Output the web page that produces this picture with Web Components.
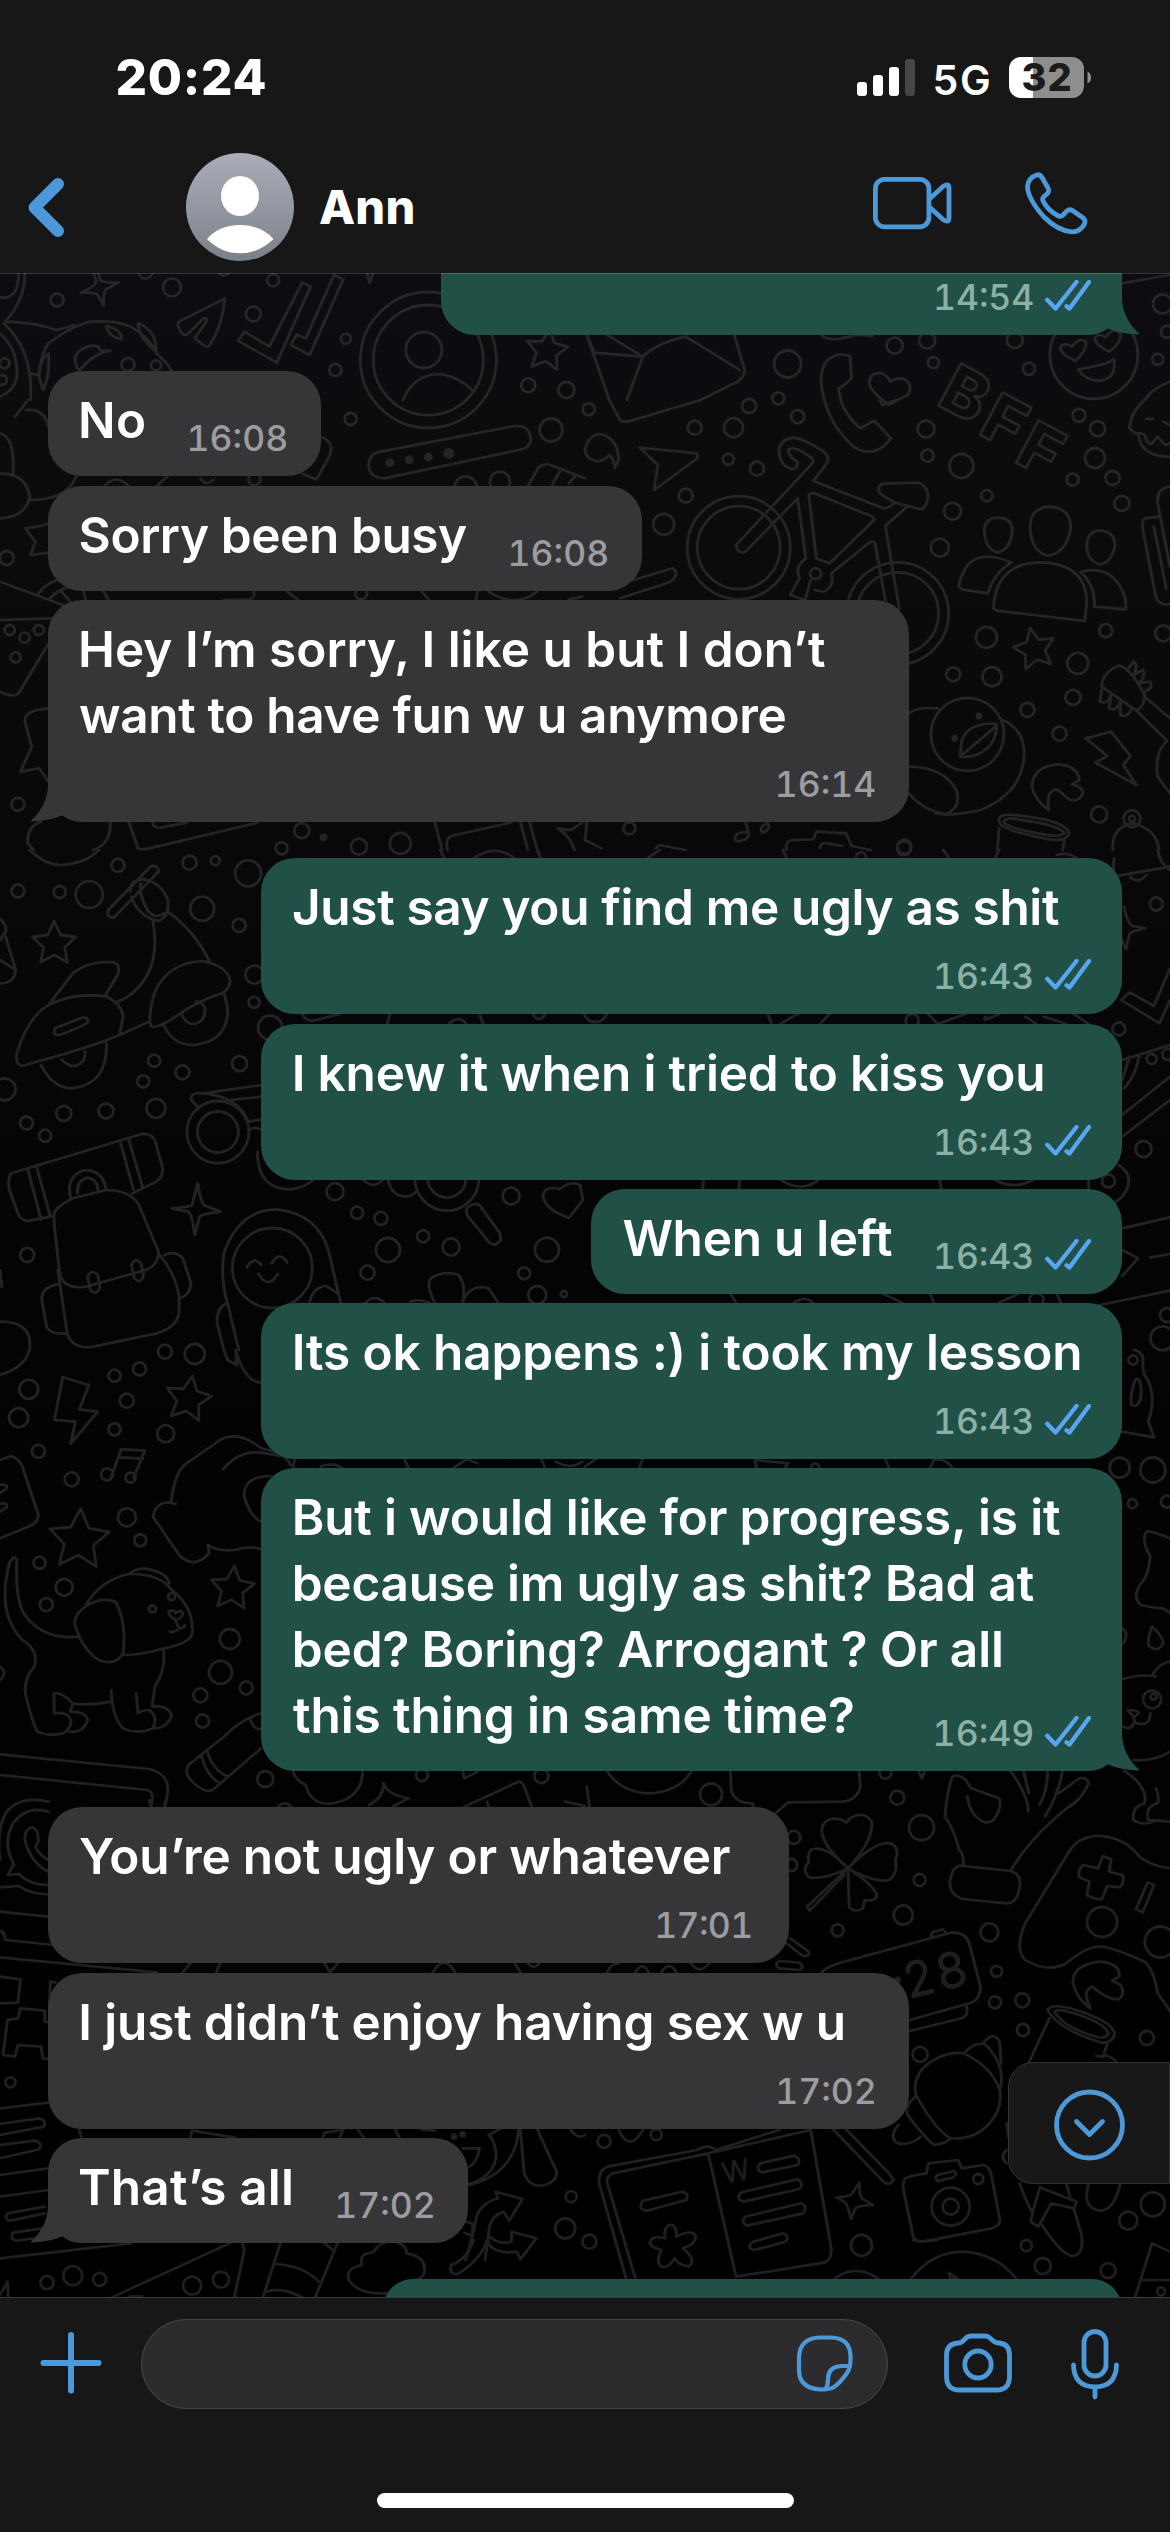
<!DOCTYPE html>
<html lang="en">
<head>
<meta charset="utf-8">
<title>Chat</title>
<style>
html,body{margin:0;padding:0;background:#171717}
body{width:1170px;height:2532px;overflow:hidden;font-family:Inter,"Open Sans",sans-serif}
</style>
</head>
<body>
<chat-app></chat-app>

<template id="app-t">
<style>
:host{display:flex;flex-direction:column;width:1170px;height:2532px;background:#171717;color:#fff}
.log{height:2024px;position:relative;overflow:hidden;flex:none}
.log::after{content:"";position:absolute;left:0;right:0;top:0;height:1px;background:rgba(255,255,255,.17);z-index:3}
.list{position:relative;display:flex;flex-direction:column;padding:0 48px;z-index:1}
.g9{margin-top:9px}.g10{margin-top:10px}.g36{margin-top:36px}
</style>
<status-bar></status-bar>
<chat-header></chat-header>
<div class="log">
<doodle-wall></doodle-wall>
<div class="list">
<chat-message side="out" width="681" time="14:54" tw="99" tail cut="top"></chat-message>
<chat-message class="g36" side="in" width="273" inline time="16:08" tw="99.6"><fit-text x="33" w="63">No</fit-text></chat-message>
<chat-message class="g10" side="in" width="594" inline time="16:08" tw="99.6"><fit-text x="32.6" w="386.5">Sorry been busy</fit-text></chat-message>
<chat-message class="g9" side="in" width="861" time="16:14" tw="99.3" tail><fit-text x="33" w="744">Hey I’m sorry, I like u but I don’t</fit-text><fit-text x="32" w="705.5">want to have fun w u anymore</fit-text></chat-message>
<chat-message class="g36" side="out" width="861" time="16:43" tw="99"><fit-text x="32" w="766">Just say you find me ugly as shit</fit-text></chat-message>
<chat-message class="g10" side="out" width="861" time="16:43" tw="99"><fit-text x="33.7" w="747.7">I knew it when i tried to kiss you</fit-text></chat-message>
<chat-message class="g9" side="out" width="531" inline time="16:43" tw="99"><fit-text x="32.4" w="268.6">When u left</fit-text></chat-message>
<chat-message class="g9" side="out" width="861" time="16:43" tw="99"><fit-text x="33.7" w="784.6">Its ok happens :) i took my lesson</fit-text></chat-message>
<chat-message class="g9" side="out" width="861" inline time="16:49" tw="99.4" tail><fit-text x="33.7" w="765.3">But i would like for progress, is it</fit-text><fit-text x="33.7" w="739">because im ugly as shit? Bad at</fit-text><fit-text x="33.7" w="706.3">bed? Boring? Arrogant ? Or all</fit-text><fit-text x="32" w="560">this thing in same time?</fit-text></chat-message>
<chat-message class="g36" side="in" width="741" time="17:01" tw="95.3" tr="38.5"><fit-text x="32" w="649.8">You’re not ugly or whatever</fit-text></chat-message>
<chat-message class="g10" side="in" width="861" time="17:02" tw="98.8"><fit-text x="33.3" w="761.5">I just didn’t enjoy having sex w u</fit-text></chat-message>
<chat-message class="g9" side="in" width="420" inline time="17:02" tw="98.8" tail><fit-text x="32" w="211">That’s all</fit-text></chat-message>
<chat-message class="g36" side="out" width="739" cut="bottom"></chat-message>
</div>
<scroll-down></scroll-down>
</div>
<chat-composer></chat-composer>
</template>

<template id="status-t">
<style>
:host{display:flex;height:120px;justify-content:space-between;flex:none}
.l{padding:38px 0 0 117.5px}
.clock{font-size:49.5px;font-weight:780;line-height:78px;display:block}
.r{display:flex;padding:57px 78px 0 0;align-items:flex-start}
.net{font-size:41px;font-weight:600;line-height:52px;margin:-3px 20px 0 20px}
.bat{width:75px;height:41px;border-radius:12px;background:linear-gradient(90deg,#fff 24px,#8e8e8e 24px);display:flex;justify-content:center;align-items:center}
.bat fit-text{color:#1b1b1b;font-size:38px;font-weight:800;line-height:41px}
svg{display:block}
</style>
<div class="l"><fit-text class="clock" w="148">20:24</fit-text></div>
<div class="r">
<svg width="58" height="41"><g fill="#fff"><rect y="25" width="10" height="14" rx="3.2"/><rect x="16" y="18" width="10" height="21" rx="3.2"/><rect x="32" y="10" width="10" height="29" rx="3.2"/></g><rect x="48" y="2" width="10" height="37" rx="3.2" fill="#464646"/></svg>
<fit-text class="net" w="54.5">5G</fit-text>
<div class="bat"><fit-text w="48">32</fit-text></div>
<svg width="8" height="41"><path d="M3.5 14.5Q7 16 7 20.5T3.5 26.5Z" fill="#8e8e8e"/></svg>
</div>
</template>

<template id="header-t">
<style>
:host{display:flex;height:153px;flex:none;align-items:flex-start}
svg{display:block;flex:none}
.name{font-size:47px;font-weight:780;line-height:58px;margin:58px 0 0 26px}
.calls{margin-left:auto;display:flex;padding:52px 79px 0 0;gap:70px}
.calls svg{fill:none;stroke:#4d98d8;stroke-width:4.8;stroke-linejoin:round;stroke-linecap:round}
</style>
<svg width="186" height="153" viewBox="0 120 186 153" fill="none" stroke="#4d98d8" stroke-width="12" stroke-linecap="round" stroke-linejoin="round"><path d="M58 184L34.5 207.5L58 231"/></svg>
<svg width="108" height="153" viewBox="186 120 108 153"><defs><linearGradient id="a" x2="0" y2="1"><stop stop-color="#a9adb9"/><stop offset=".6" stop-color="#8f939d"/><stop offset="1" stop-color="#7b8188"/></linearGradient></defs><circle cx="240" cy="207" r="54" fill="url(#a)"/><ellipse cx="240" cy="196" rx="19" ry="20" fill="#fff"/><path d="M207 239Q219 225 240 225T273.5 239Q259 253.300 240 253.300T207 239Z" fill="#fff"/></svg>
<fit-text class="name" w="93.400">Ann</fit-text>
<div class="calls">
<svg width="81" height="64" viewBox="872 172 81 64"><rect x="875.400" y="179.400" width="53.500" height="47.400" rx="9"/><path d="M930.500 198L943 186.500Q949 182.500 949 188V218Q949 223.500 943 219.500L930.500 208"/></svg>
<svg width="68" height="64" viewBox="1023 172 68 64"><path d="M1036.500 175Q1040 174 1042.300 178L1048 188Q1049.500 191 1047.500 193.500L1043.500 197Q1042 199 1043.200 201.500Q1049 211.500 1058.500 216Q1061 217 1063 215L1067 210.800Q1069.500 208.800 1072.500 210.500L1082.500 217.500Q1086 220 1084.500 224Q1080 232 1072 231.800Q1058 231 1044 217Q1028 199 1027.500 187Q1028 178 1036.500 175Z"/></svg>
</div>
</template>

<template id="message-t">
<style>
:host{display:flex}
:host([side=out]){justify-content:flex-end}
.b{position:relative;box-sizing:border-box;display:flex;flex-direction:column;padding:16px 0;border-radius:34px;background:#363638;color:#fff;font-size:49.5px;font-weight:570;line-height:66px}
:host([side=out]) .b{background:#215146}
:host([inline]) .text{padding-bottom:7px}
:host([inline]) .meta{margin-top:-44px}
.meta{display:flex;justify-content:flex-end;align-items:center;height:44px;margin-top:14px;font-size:35.5px;font-weight:550;line-height:44px;color:#9c9ca1;padding-right:34px}
:host([side=out]) .meta{color:#8cb0a6;padding-right:31px;gap:12px}
.meta fit-text{font-feature-settings:"tnum" 1,"calt" 1;margin-top:2px}
.tail{position:absolute;bottom:0;left:-18px}
:host([side=out]) .tail{left:auto;right:-18px;transform:scaleX(-1)}
:host([cut=top]) .b{height:62px;padding:0 0 16px;border-radius:0 0 34px 34px}
:host([cut=top]) .meta{margin-top:2px}
:host([cut=bottom]) .b{height:60px}
.tick{display:block;margin-top:-4px}
</style>
<div class="b"><div class="text"><slot></slot></div></div>
</template>

<template id="composer-t">
<style>
:host{display:flex;flex-direction:column;flex:1;background:#171717;border-top:1px solid #3c3c3e;box-sizing:border-box;align-items:center}
.row{display:flex;width:100%;padding-top:21px;height:90px}
.field{box-sizing:border-box;width:747px;height:90px;border:1px solid #48484a;border-radius:45px;background:#2c2c2e;display:flex;justify-content:flex-end;align-items:center}
svg{display:block;fill:none;stroke:#4d98d8;stroke-width:4.8;stroke-linejoin:round;stroke-linecap:round}
.home{width:417px;height:15px;border-radius:8px;background:#fff;margin-top:84px}
</style>
<div class="row">
<svg width="141" height="90" viewBox="0 2319 141 90" style="stroke-width:6"><path d="M71 2335V2390.500M43.500 2363H98.500"/></svg>
<div class="field"><svg width="92" height="88" viewBox="796 2320 92 88" style="stroke-width:4.2"><path d="M821 2337.500H832Q851 2338 851.500 2356Q852 2368 848 2373Q841 2383 835 2387Q831 2389.500 821 2389.500Q800 2388 800 2370V2357Q801 2338 821 2337.500Z"/><path d="M850 2366H842Q829 2367 829 2379Q829 2385 827 2388"/></svg></div>
<svg width="282" height="90" viewBox="888 2319 282 90"><path d="M972 2336H985Q988 2336 990 2338L994 2341.500Q996 2343 999 2343Q1009.500 2344 1009.500 2355V2376Q1009.500 2390 997 2390H959Q946.500 2390 946.500 2376V2355Q946.500 2344 958 2343Q961 2343 963 2341L966 2338Q968 2336 972 2336Z"/><ellipse cx="978" cy="2364.500" rx="13.200" ry="13.500"/><rect x="1084" y="2331.500" width="22" height="44.500" rx="11"/><path d="M1073.500 2365Q1074 2386.500 1095 2387Q1116 2386.500 1116.500 2365M1095 2387V2397"/></svg>
</div>
<div class="home"></div>
</template>

<template id="down-t">
<style>
:host{position:absolute;z-index:2;right:0;top:1789px;width:162px;height:122px;box-sizing:border-box;border:1px solid #343436;border-radius:25px 0 0 25px;background:#181818;display:block}
svg{display:block;fill:none;stroke:#4d98d8;stroke-width:4.8;stroke-linecap:round;stroke-linejoin:round}
</style>
<svg width="160" height="120"><circle cx="80.500" cy="62" r="33"/><path d="M67.500 58.500L80.500 71.500L93.500 58.500"/></svg>
</template>

<script>
const stamp = (el, id) => {
  const root = el.attachShadow({mode: 'open'});
  root.append(document.getElementById(id).content.cloneNode(true));
  return root;
};

/* One line of text whose letter spacing is tuned so its ink spans the given width. */
class FitText extends HTMLElement {
  connectedCallback() {
    if (this.shadowRoot) return;
    const root = this.attachShadow({mode: 'open'});
    root.innerHTML = '<style>:host{display:block;flex:none;white-space:pre}span{display:inline-block}</style><span><slot></slot></span>';
    const text = this.textContent, cs = getComputedStyle(this), span = root.querySelector('span');
    const ctx = document.createElement('canvas').getContext('2d');
    ctx.font = cs.fontWeight + ' ' + cs.fontSize + ' Inter, "Open Sans", sans-serif';
    const w = +this.getAttribute('w');
    const m = ctx.measureText(text);
    /* Font features widen the laid-out line beyond what the canvas reports. */
    const extra = span.getBoundingClientRect().width - m.width;
    const ink = m.actualBoundingBoxRight + m.actualBoundingBoxLeft;
    this.style.letterSpacing = ((w - ink - extra) / (text.length - 1)).toFixed(3) + 'px';
    this.style.width = w + 'px';
    if (this.hasAttribute('x')) this.style.marginLeft = this.getAttribute('x') + 'px';
    span.style.marginLeft = m.actualBoundingBoxLeft + 'px';
  }
}

class ChatMessage extends HTMLElement {
  connectedCallback() {
    if (this.shadowRoot) return;
    const root = stamp(this, 'message-t'), b = root.querySelector('.b');
    b.style.width = this.getAttribute('width') + 'px';
    const out = this.getAttribute('side') === 'out', time = this.getAttribute('time');
    if (time) {
      const pad = this.getAttribute('tr');
      b.insertAdjacentHTML('beforeend', `<div class="meta"${pad ? ` style="padding-right:${pad}px"` : ''}><fit-text w="${this.getAttribute('tw')}">${time}</fit-text>${out ? '<svg class="tick" width="46" height="31" fill="none" stroke="#58a5f3" stroke-width="4.300" stroke-linecap="round" stroke-linejoin="round"><path d="M2.200 19.800L10.600 28.500L31.500 2M21.500 26.200L24.500 28.500L44 2"/></svg>' : ''}</div>`);
    }
    if (this.hasAttribute('tail')) b.insertAdjacentHTML('beforeend', `<svg class="tail" width="60" height="60"><path d="M18 18V24Q17 44 1 58.500Q.5 59.600 3 59.400Q20 59 33 53L34 18Z" fill="${out ? '#215146' : '#363638'}"/></svg>`);
  }
}

/* Wallpaper: line doodles, grouped in tiles that share one coordinate scale. */
const SX = 585 / 1568, SY = 1 / 3;
const TILES = [
 [0,0,`M252 822L258 845Q255 860 216 878Q250 875 262 885L278 916Q276 880 284 868L318 847Q290 850 270 843L264 822M66 820Q70 890 15 965M0 892Q50 900 50 820M15 965Q100 968 150 990Q170 985 200 975M105 1120Q110 1060 130 1030Q180 985 240 965Q310 960 350 980Q400 1010 420 1060Q450 1090 460 1112M285 978Q290 1010 325 1018Q330 990 285 978ZM370 970Q370 1010 418 1055Q420 990 370 970ZM295 1052Q250 1060 213 1112Q190 1080 210 1055Q240 1030 265 1040Q260 1055 295 1052M130 1060Q100 1090 105 1130L115 1170Q135 1130 130 1060M0 1000Q50 1050 45 1130Q40 1170 0 1190M10 970Q90 1050 82 1200M82 1120L105 1125M603 895L480 965Q470 975 490 1003Q500 1008 510 995L545 955Q560 950 550 970L522 1015L545 1035Q560 1045 562 1035Q595 980 603 895ZM810 847L832 860L742 1088L638 1022L655 995L722 1040ZM895 825L920 838L830 1065L780 1035L795 1003L820 1015ZM985 822L990 848L1000 822M1080 1200Q1110 1122 1180 1122Q1230 1130 1265 1170`,
 [[153,900,6.5],[461,862,9],[732,841,6],[679,942,7.5],[927,1016,5],[899,1110,6],[1416,1156,7],[1518,1170,8],[390,815,7],[600,808,6],[12,1090,5],[5,1140,5],[1148,1080,68],[1148,1080,55],[1136,1050,18],[343,1094,6.5],[418,1096,5]],[[1466,1052,20,8]]],
 [585,0,`M1439 850L1568 825M5 1005L65 1200M5 1005L25 1058L155 1070L60 1005M155 1070L112 1200M155 1070Q190 1030 270 1010L415 1110M400 1005L428 1110Q428 1140 390 1155L310 1200M642 1200Q620 1120 650 1080Q680 1055 710 1068L715 1135Q690 1160 680 1165L685 1200M635 1005Q650 1030 725 1005L770 1008M815 1215Q760 1170 762 1145Q765 1115 795 1120Q815 1130 818 1145Q840 1130 860 1140Q880 1160 865 1185Q845 1195 815 1215ZM1315 1083Q1270 1060 1275 1040Q1285 1025 1305 1040Q1325 1010 1343 1025Q1345 1050 1315 1083ZM1405 1055Q1362 1030 1367 1012Q1378 998 1395 1012Q1415 980 1435 1000Q1440 1025 1405 1055ZM1322 1108Q1400 1095 1418 1078Q1425 1140 1375 1142Q1340 1140 1322 1108ZM1500 1200Q1520 1165 1568 1145`,
 [[1548,912,9.5],[1560,995,6],[830,1037,8],[917,1022,8],[934,1088,5.5],[1152,1020,8],[1190,1106,6],[1535,1078,5.5],[543,1092,13.5],[518,1195,6],[1364,1065,44]],[]],
 [0,400,`M40 50L75 0M70 30Q120 25 130 80M0 100Q40 110 35 220M0 220Q70 220 80 290Q70 350 0 355M80 300Q180 300 205 228M280 258Q310 220 345 258M865 112Q900 130 880 175L848 238L810 222M1020 155L1380 78Q1420 75 1423 120Q1420 145 1390 150L1030 235Q990 235 988 195Q990 160 1020 155ZM1415 258L1445 200Q1460 190 1475 195L1568 235M1480 255L1500 215M1525 250L1540 230M420 258L450 228M538 235Q550 260 572 240M130 370L110 378L68 385L95 425L82 465L130 458M0 545L180 620M135 655L0 660M100 585Q130 535 200 530Q270 540 290 600M130 600Q160 560 200 560M165 575L200 620M220 560L230 600M130 730L50 880Q40 895 0 875M130 925Q60 930 68 970L85 1040L55 1115L105 1105L130 1145M110 1265Q70 1280 75 1330L90 1350M295 1265Q300 1330 250 1350M345 1265L370 1345Q380 1350 400 1345L690 1268M410 1268Q410 1285 430 1283L500 1268M1165 1265L1185 1350M1200 1350Q1190 1310 1220 1305L1370 1268M1395 1268L1415 1350M1420 1268L1440 1350M1495 1285L1530 1290L1560 1268M1495 1285Q1530 1310 1540 1350M600 600L670 598Q685 590 680 575M770 575L800 600M1130 575L1150 600M1280 575L1275 600M1310 575Q1380 625 1440 575M1525 598L1560 590`,
 [[18,474,7],[682,238,6],[940,57,6],[1477,90,11.5],[1340,245,10],[1248,262,11],[26,690,5],[66,713,5],[104,690,5],[42,772,5],[48,1213,6.5],[809,1292,7.5],[755,1345,6],[962,1340,8],[1073,1330,10.5],[968,580,6],[1045,188,3,1],[1097,179,3,1],[1148,171,3,1],[1203,160,4,1],[867,1312,2.5,1]],[]],
 [585,400,`M65 0L95 62Q110 68 130 60L310 0M642 0Q660 80 720 140Q760 170 800 140L820 115L775 62L738 85Q700 50 685 0M790 0L797 15L835 0M0 150Q10 100 45 103Q90 120 90 180L80 203Q80 180 65 165Q50 185 30 183Q0 175 0 150M147 143L300 160Q305 168 298 178L185 270L195 195ZM405 435L605 195Q620 180 600 168Q560 135 545 150Q545 170 570 185Q570 205 555 208Q520 195 520 150Q525 115 560 113Q590 118 640 155Q660 175 645 195L612 243L800 325Q815 325 830 308L790 280Q780 250 810 250L895 248Q925 265 918 300Q910 335 890 325L830 308M865 318L805 378L842 625M405 435Q410 465 430 455L570 295L592 475Q560 500 575 535L550 585L590 600L605 540M600 285L620 475L655 490L775 360Q775 350 760 345L615 280Q600 280 600 285M665 515L765 425Q775 420 778 435L805 600M660 520Q670 560 640 575L615 570M1070 395Q1070 353 1107 353Q1147 355 1145 395Q1140 450 1105 457Q1075 450 1070 395ZM1193 380Q1195 320 1247 320Q1302 325 1302 385Q1290 460 1242 467Q1195 455 1193 380ZM1345 435Q1347 390 1383 392Q1422 395 1420 440Q1410 490 1378 493Q1345 480 1345 435ZM1143 487Q1060 450 1025 495Q1005 530 1002 560L1010 568L1080 580Q1095 520 1143 487ZM1095 625Q1100 490 1220 487Q1340 490 1345 600L1340 663L1105 632ZM1328 515Q1400 495 1435 560Q1455 600 1448 628L1365 620Q1370 560 1328 515ZM1568 260Q1530 265 1535 310L1568 500M1540 350L1500 355Q1490 365 1497 400L1530 590Q1540 620 1568 612M1525 380L1558 565M1500 0Q1460 40 1460 85Q1475 105 1490 100L1500 105Q1510 140 1520 130L1535 110L1555 135L1568 130M1483 105Q1490 170 1568 170M1505 57H1523M1550 65L1568 75M1430 797Q1460 800 1500 885Q1500 920 1478 932L1385 860Q1385 820 1430 797ZM1455 808L1470 785Q1485 795 1470 825L1495 810Q1505 825 1485 850L1515 845Q1525 865 1498 875M1385 870L1380 905Q1400 915 1410 885L1405 925Q1425 935 1435 905L1435 945Q1455 955 1465 925M1500 890L1568 955M1478 932L1560 1022Q1525 1060 1535 1130L1568 1180M1342 1015L1410 995L1462 1068L1443 1095L1478 1155L1368 1088L1400 1068ZM1103 972Q1030 965 1010 1020L1005 1070Q1060 1075 1090 1030Q1105 1000 1103 972M1005 1070L1100 980M868 940Q890 920 945 925M1120 960Q1180 990 1177 1070Q1170 1180 1060 1230Q980 1250 940 1240M868 1100Q960 1100 995 1170Q1010 1220 970 1242Q910 1235 868 1180M1305 1153L1325 1140Q1320 1095 1265 1093Q1200 1100 1198 1160Q1205 1200 1243 1230Q1235 1170 1265 1168L1300 1200Q1330 1205 1335 1175Q1325 1155 1305 1153M1110 1265Q1105 1240 1150 1245Q1290 1260 1297 1300Q1290 1330 1230 1315Q1115 1290 1110 1265ZM1122 1265Q1130 1250 1160 1258Q1275 1275 1285 1300Q1270 1312 1230 1303Q1130 1285 1122 1265ZM1110 1285L1105 1350M1285 1325L1280 1350M1415 1350Q1410 1280 1470 1270Q1535 1290 1538 1350M430 1268Q440 1290 438 1310Q420 1330 402 1320Q400 1295 430 1297M490 1268Q500 1290 475 1298Q465 1280 490 1268M540 1350Q535 1320 560 1320L612 1318L620 1295L700 1300L715 1338L765 1350M630 1345Q630 1325 650 1330L690 1338M190 1345L200 1335L270 1350M5 1268L0 1320L45 1345M95 595L230 545Q255 520 235 505L130 540`,
 [[10,28,6],[440,18,7],[570,50,6.5],[398,83,9.5],[294,83,7],[384,178,5.5],[461,206,7],[270,287,7],[211,373,10.5],[914,87,8.5],[918,167,6],[1009,198,12],[1324,46,6.5],[1374,86,7.5],[1367,174,10],[1307,239,6],[1414,234,7],[1439,310,7.5],[1077,287,5.5],[985,334,8.5],[951,443,9],[1076,712,10.5],[1396,692,6.5],[1550,700,8],[987,823,7],[1091,830,9.5],[1321,790,10.5],[1308,892,7.5],[1186,930,7],[1272,1001,7],[1378,1243,8],[119,1285,6],[856,1340,7],[412,443,51.5],[412,443,41.5],[838,640,51],[838,640,41],[618,521,5.5],[1025,1003,36.5],[1056,948,2,1],[991,1015,2,1],[1466,1256,8.5],[1466,1256,3]],[[1205,748,20,-12]]],
 [0,850,`M80 0Q120 45 165 45Q230 40 265 0M290 180Q285 205 305 203L425 65Q425 45 405 48ZM350 125Q345 90 385 88Q430 95 450 150Q455 200 425 213Q370 200 352 140M378 100Q370 130 395 180Q415 210 440 190M410 215Q425 310 395 375Q360 440 310 457M452 187Q520 240 562 335M405 530Q395 500 415 425Q450 340 540 333Q610 345 617 395Q610 430 580 435Q520 460 470 500Q425 535 405 530M437 520Q460 585 520 585Q605 575 610 490Q610 460 600 430M487 490Q495 522 520 522Q555 515 548 470Q540 455 525 455M130 465L195 370Q240 330 305 337Q325 345 315 375L282 437M130 465Q200 425 285 440Q325 460 330 500L320 555Q250 590 60 647Q40 645 45 610Q75 500 130 465ZM320 555L400 515M150 533L220 503Q238 500 235 517Q230 525 160 555Q135 555 150 533M110 645Q140 715 195 715Q290 700 285 580M165 628Q180 648 200 648Q230 640 228 605M0 205Q20 230 15 245L0 270M15 260L42 360Q40 400 0 400M0 330L40 358M530 770L512 750Q510 725 545 730L700 705M620 750L700 740M545 730Q640 740 665 815L700 808M668 840Q680 828 700 838M690 905Q690 1020 780 1018Q820 1012 838 990M355 1030L410 1000Q440 985 435 950L415 870Q405 850 380 852L30 970Q20 985 25 1020L50 1095Q60 1115 80 1112L145 1098M75 960L110 1108M98 950L135 1100M322 875L358 1020M345 868L382 1010M190 1045Q175 985 220 962Q275 955 285 1020M208 1030Q205 990 235 983Q260 988 263 1020M145 1090Q150 1070 195 1045L285 1020Q345 1020 370 1060L425 1205Q425 1245 390 1260L230 1310Q170 1320 160 1270L145 1120ZM155 1260L180 1450Q195 1500 250 1490L420 1450Q480 1430 480 1380V1340Q470 1270 428 1215M440 1215Q470 1200 490 1225L512 1300Q510 1335 482 1345M157 1303Q110 1310 112 1350L125 1430Q135 1455 180 1450M235 1280Q245 1255 262 1275L268 1310Q260 1340 242 1320ZM352 1245Q362 1220 378 1240L385 1275Q378 1305 360 1285ZM530 1000Q540 1070 552 1068L592 1085Q545 1090 535 1100L522 1155Q515 1095 505 1085L460 1075Q510 1070 515 1065ZM640 1500L610 1360Q590 1290 600 1210Q640 1080 740 1078Q850 1090 880 1200L913 1358M662 1252Q680 1215 700 1245M728 1240Q750 1200 770 1238M693 1272Q718 1320 745 1272M610 1358Q580 1370 582 1420L600 1500M830 1355Q840 1310 875 1308L905 1330M1255 1070Q1245 1085 1255 1100L1310 1175Q1325 1195 1342 1170L1340 1150L1285 1065Q1270 1058 1255 1070M1040 990Q1050 1040 1090 1040Q1110 1035 1115 1025M975 990Q1000 1020 1025 990M1525 1103Q1460 1080 1455 1035Q1465 1005 1500 1018Q1530 990 1555 1005L1562 1050ZM1165 1358Q1140 1300 1155 1285Q1190 1260 1230 1275Q1250 1310 1240 1355Q1260 1300 1310 1315L1335 1358M1100 1355Q1120 1345 1150 1358M980 1358Q1005 1330 1030 1358M0 1415Q80 1415 80 1480V1500M0 1260L5 1310M810 492Q820 515 840 512L910 492M1045 492L1038 522M1285 492L1295 522M1205 520Q1225 495 1250 520M1430 495Q1445 520 1460 495M1180 0L1190 25M1440 0L1450 25M1270 25Q1325 -20 1380 25`,
 [[316,46,6.5],[508,38,7],[577,32,4.5],[665,70,13],[48,123,6.5],[160,126,6],[239,134,13.5],[542,176,12],[641,226,6.5],[682,374,9],[681,457,5.5],[724,533,12],[413,632,6],[489,667,7],[642,641,7.5],[384,694,6],[12,718,11],[171,790,7.5],[284,783,7.5],[418,775,9.5],[71,819,6.5],[121,857,6],[73,1215,7],[898,1025,8.5],[957,1088,6],[1021,1105,6.5],[1134,1159,6],[1209,1191,8.5],[1040,1200,12],[985,1268,7],[1370,1038,8.5],[1466,1199,12],[1405,1270,6],[1440,1335,9],[1511,1332,3],[584,846,31],[584,846,20.5],[730,1254,40],[1198,986,32],[1198,986,19]],[[145,282,21,0]]],
 [585,850,`M1445 170Q1455 225 1470 228L1502 235Q1465 245 1460 250L1450 298L1439 270M1418 25L1415 80L1568 50M1462 80Q1480 105 1505 75M1535 0Q1540 40 1568 60M1568 355L1525 468L1460 427L1437 450L1540 520L1568 450M1440 630L1568 585M1485 620Q1475 680 1445 715M1460 620L1440 690M1439 795L1568 680M1439 860L1568 750M1430 945Q1480 980 1440 1040L1420 1058M1350 992V1015M1439 1135L1568 1102M1440 1200L1482 1225L1440 1278M1515 1222L1568 1212M1380 1365L1568 1322M170 22L200 0M530 0L540 22M960 0L975 22M1110 0L1100 22M1265 15Q1290 5 1315 22M490 492L500 522M525 520L570 492M630 522L655 492M920 492L945 522L1020 492M1075 500Q1060 520 1110 492M1180 500L1210 522M1230 500L1290 522M1310 492L1350 522M318 990L315 1018M415 990L412 1018M525 990Q580 1030 625 990M950 990L955 1018M1100 990Q1150 1020 1200 990M390 1332L405 1358M560 1358Q590 1335 610 1358M800 1332L850 1358M925 1332L935 1358M1110 1358L1160 1332M1265 1332L1275 1358`,
 [[1531,162,6.5],[1431,537,6.5],[1519,627,5],[1562,613,5.5],[1497,897,8],[1403,993,6.5],[1548,1465,12],[1560,1395,7],[1210,1350,7],[877,512,6.5],[28,480,12],[855,-5,7],[740,22,5]],[]],
 [0,1350,`M0 75Q70 50 78 0M168 82L238 105L213 178L262 185L190 280L202 215L146 210ZM298 380L325 298L388 302L358 385M318 322L382 326M0 330L30 318Q50 325 60 350L103 495Q100 520 80 528L0 565M0 405Q20 400 18 415L0 430M0 462Q20 455 18 472L0 485M470 462L458 458Q470 360 500 340L590 270Q640 240 700 295Q770 310 778 345M598 358Q640 300 700 308L750 318M470 462Q420 445 410 500L480 615Q520 660 560 610L558 585Q580 605 630 600Q670 585 700 598M725 378Q650 380 655 440Q670 500 700 515M600 0L610 30L635 45L632 0Q655 95 700 98M210 860Q120 870 70 800Q40 760 45 630Q38 610 25 640Q-10 790 60 870Q105 900 92 950Q60 990 70 1040Q85 1110 100 1145Q130 1160 170 1150Q200 1125 185 1100Q170 1085 145 1090V1030Q165 1025 195 1060Q240 1068 298 1055M195 1060L188 1085Q230 1085 235 1110Q225 1150 185 1145M298 1020Q300 1100 330 1135Q370 1155 410 1135Q425 1100 400 1080Q380 1080 370 1090L365 1030M438 900Q445 960 415 1010L408 1070Q450 1065 460 1095Q450 1135 410 1135M235 765Q200 790 200 820Q220 900 265 930Q310 950 330 910Q340 820 310 755Q275 740 235 765M230 765Q270 690 345 672Q430 670 460 720Q520 770 515 850Q510 880 440 895Q380 915 335 915M345 672Q370 650 400 658Q450 670 453 700M470 810Q445 790 455 782Q470 780 470 790Q485 775 490 790Q488 805 470 810L480 835Q495 835 495 825M480 835Q465 850 455 845M700 1090Q650 1105 600 1160L505 1245Q490 1270 520 1300Q550 1330 570 1320L700 1195M540 1218Q555 1280 590 1300M555 1203Q570 1260 610 1280M670 1105Q680 1140 700 1138M0 1213L400 1257Q450 1270 450 1320L443 1370M0 1275L395 1320Q410 1325 408 1345L405 1370M785 1262Q790 1290 820 1305Q830 1360 880 1362Q970 1350 972 1265M1055 1368L1095 1345Q1040 1335 1028 1300Q1030 1340 990 1365M1245 1370L1390 1295Q1400 1295 1405 1310L1425 1370M1305 1355L1310 1370M1240 1262L1245 1285L1280 1265M1515 1355L1568 1368M745 1370Q765 1350 780 1370M790 326L785 354M860 350Q890 335 915 352M1085 330L1095 354M1215 354L1250 328L1280 340M1450 326L1460 350M1490 335Q1530 360 1560 335`,
 [[442,5,7],[522,12,10],[77,118,9.5],[50,203,9.5],[307,77,6],[374,57,6.5],[340,152,7],[307,238,6],[444,251,8.5],[103,304,6.5],[192,388,7],[340,502,9],[376,571,6],[106,638,6],[172,712,8.5],[124,764,6.5],[616,867,10],[591,967,11.5],[537,1036,7],[660,1014,6.5],[543,1113,6.5],[711,1287,8],[1131,1275,6],[1451,1278,7],[287,373,6],[350,383,5],[409,777,3.5],[460,740,3.5],[-8,970,7]],[[505,148,22,10],[212,570,29,3],[623,716,21,5]]],
 [585,1350,`M1439 245L1525 262L1510 215Q1535 130 1500 75Q1495 70 1495 20Q1485 0 1470 0M1475 90Q1460 130 1465 165Q1480 175 1488 150Q1495 110 1485 90Q1480 85 1475 90M1568 565Q1515 540 1505 545Q1490 570 1515 620Q1510 680 1490 700Q1465 740 1490 765Q1530 775 1550 775L1568 790M1520 830Q1505 870 1512 888Q1535 910 1550 880Q1550 860 1520 830M1440 835Q1460 850 1442 880M1439 988Q1490 970 1530 980M1522 972Q1540 940 1568 935M1455 1080Q1485 1080 1485 1090L1470 1102ZM1470 1102Q1480 1125 1455 1135L1442 1130M1480 1120Q1515 1130 1515 1090M1568 1205Q1530 1235 1470 1230M1445 1262Q1510 1310 1500 1360Q1465 1370 1470 1410Q1495 1430 1530 1412M1530 1315Q1540 1340 1535 1360Q1500 1370 1510 1410L1568 1415M965 1400Q970 1320 985 1280Q1000 1270 1020 1290L1035 1315L1110 1345Q1120 1370 1095 1410Q1075 1425 1060 1410Q1030 1390 1025 1340M965 1400Q990 1440 1003 1500Q1015 1510 1015 1545M1140 1262Q1190 1340 1188 1385M1175 1262L1190 1330M1240 1262Q1240 1320 1218 1365M1280 1262Q1270 1330 1233 1400M1270 1330L1325 1285Q1345 1280 1350 1300Q1330 1350 1300 1370M60 1265Q100 1330 175 1330Q250 1325 285 1265M390 1265L392 1320Q400 1360 450 1360V1370M735 1265L738 1310Q730 1350 690 1355L545 1357L505 1395M895 1265L903 1285L910 1265M5 1310L12 1370M0 350L30 326M155 326L145 354M460 354L455 330L545 340L535 354M805 326L815 354M925 354L935 330Q970 325 985 354`,
 [[1469,30,4.5],[1433,353,10],[1522,360,12.5],[1467,461,4.5],[1560,455,6],[837,1343,7],[338,1333,11],[805,1268,6],[1520,1048,9],[1524,1040,3],[617,352,4]],[]],
 [0,1800,`M405 22L400 0M440 22L445 0M22 225L35 195M22 225L50 222Q80 255 130 255M0 262L50 258Q80 282 130 283M130 35Q70 15 35 70Q5 130 38 195M130 5Q50 -15 15 40Q-10 90 0 180M130 180Q105 165 95 140L103 125L100 95Q85 70 70 95Q60 120 80 160Q100 200 130 215M0 335L130 350M0 395H8L15 420L145 435M0 472L420 517M0 530L55 538L48 608L0 610M55 625L48 655L20 660L8 765L40 770L48 735L110 740L115 775L130 777M55 625L120 632V665L130 667M150 547L135 545L133 620M0 925L130 908M0 972L105 955Q125 960 118 980L0 1005M0 1035L95 1022Q115 1030 105 1048L0 1075M0 1125L130 1105M0 1190L130 1170M120 1220L20 1240Q10 1260 28 1262L120 1240M115 1285L35 1298Q25 1320 45 1322L90 1315M0 1375L350 1330M510 490L490 517M590 490L580 517M870 490L885 517L905 490M1160 517Q1190 460 1220 517M1380 490L1395 517M1415 490Q1430 510 1445 490M212 988L218 1013M510 1013L515 992L630 1013M865 1013L870 998L920 990L910 1013M960 990L975 1013M1060 988L1070 1013M1130 988L1165 992M1250 1155Q1330 1130 1330 1060Q1325 1020 1310 1005L1340 987M1260 1155Q1380 1120 1390 990M1395 990L1405 1120Q1420 1165 1460 1155Q1500 1140 1490 1110L1440 988M1240 1045H1285Q1280 1090 1250 1105M1530 990Q1550 1020 1568 1005M1248 1380Q1270 1300 1275 1260Q1285 1210 1335 1195L1328 1175L1400 1197L1365 1262L1350 1235Q1310 1250 1310 1300L1300 1380M1312 1310Q1340 1335 1370 1325L1372 1295L1438 1315L1395 1378L1385 1355Q1330 1365 1308 1330M1250 1265L1268 1272L1265 1308L1245 1298`,
 [[28,847,5],[1531,1190,5.5],[1515,1285,10],[1217,1010,2,1],[1240,1003,2,1]],[]],
 [585,1800,`M705 205Q630 130 635 85Q645 45 690 60L700 68L710 55Q750 30 768 65Q775 120 705 205Q780 120 820 130Q845 145 832 180Q840 220 815 240Q780 250 705 205Q640 130 605 150Q595 165 600 185Q580 210 600 232Q640 240 705 205L708 320Q720 340 745 325L750 300Q780 305 782 285Q770 250 705 205L595 320L602 332L695 225M1140 213Q1200 100 1320 0M1005 197L1140 213Q1170 220 1165 260Q1160 310 1130 310L1010 297Q975 280 978 245Q985 200 1005 197ZM1568 205Q1500 195 1475 155Q1430 105 1365 108Q1320 115 1300 150L1180 370Q1150 450 1180 480Q1240 520 1290 490Q1350 435 1385 440Q1420 445 1500 485Q1525 510 1535 580L1568 632M1388 168L1410 178L1405 215L1440 225Q1448 240 1435 262L1400 258L1385 298Q1370 300 1345 285L1352 245L1325 232Q1320 210 1335 195L1375 205ZM1508 247L1525 255L1495 337L1477 328ZM1413 542L1432 530Q1435 490 1380 485Q1305 495 1308 550Q1320 600 1355 625Q1330 570 1360 560Q1400 600 1430 598Q1450 580 1435 555ZM1240 630Q1250 610 1300 625Q1410 660 1420 700Q1415 730 1385 728Q1270 690 1240 630ZM1258 635Q1270 625 1300 637Q1390 665 1403 700Q1400 715 1375 712Q1285 685 1258 635ZM1245 655L1190 787M1400 730L1390 765Q1415 770 1425 788M1370 768L1390 770M635 517Q650 500 680 490L980 398Q1020 395 1030 430L1060 560Q1060 600 1030 610L870 660M870 693L1010 655Q1030 645 1022 618M928 410L930 397L960 388L968 400M540 430L580 465Q600 475 600 455L550 415M520 483L575 488Q590 500 575 510L520 505Q505 495 520 483M1015 760Q960 750 905 805Q870 860 895 900Q940 990 980 1015Q1040 1020 1080 975Q1120 930 1112 870Q1090 800 1015 760Q1050 720 1075 735Q1130 800 1112 870M1070 725Q1100 690 1112 730L1115 790M885 890Q855 920 865 945Q900 1000 935 1035Q970 1030 980 1015M840 975Q815 1010 835 1028Q870 1040 900 1010M665 988L800 1145Q815 1160 827 1140L815 1120L700 988M855 1140Q855 1130 915 1120L920 1090L1000 1080L1010 1105L1070 1095Q1085 1100 1090 1130L1112 1260Q1110 1280 1090 1285L905 1325Q880 1325 878 1300L852 1160ZM945 1125L990 1113Q1000 1125 985 1133L945 1143Q935 1135 945 1125M735 1148Q735 1185 742 1195L772 1215Q735 1215 725 1225L713 1257Q705 1215 695 1205L673 1192Q710 1190 715 1182ZM135 1435L60 1150Q55 1130 75 1120L330 1060L605 990L660 1345Q662 1380 640 1388L405 1430L330 1060M110 1435L38 1150Q35 1110 60 1100L300 1050Q330 1030 350 1050L520 990M155 1202L260 1175Q280 1180 272 1200L165 1232Q140 1228 155 1202M470 1090L560 1067Q580 1075 570 1095L475 1117Q455 1110 470 1090M420 1177L570 1138Q588 1150 575 1167L425 1205Q400 1195 420 1177M430 1250L580 1210Q598 1220 585 1240L435 1277Q415 1265 430 1250M450 1325L530 1300Q550 1308 538 1325L455 1350Q430 1345 450 1325M225 1275Q245 1270 245 1310Q290 1285 297 1310Q295 1335 262 1345Q300 1380 280 1398Q255 1400 240 1375Q220 1410 202 1398Q190 1380 205 1350Q170 1340 175 1325Q180 1305 215 1315Q210 1285 225 1275M1165 1150Q1180 1200 1200 1240L1195 1265L1215 1280L1250 1210L1310 1225L1330 1300Q1340 1360 1310 1368Q1280 1370 1225 1275M1220 1160L1200 1235M1225 1165L1318 1205L1310 1228M1350 1150Q1330 1230 1385 1232Q1420 1225 1435 1150M1290 1150L1300 1190M60 515Q70 490 90 490M135 517Q155 480 170 517M205 517Q225 480 245 517M285 490Q305 525 332 492M90 990Q120 1060 155 990M1130 970L1135 1010M1130 1050Q1110 1070 1130 1090`,
 [[560,112,6.5],[553,195,6],[902,83,12.5],[897,240,6],[853,345,9.5],[677,391,6],[1084,397,9],[1103,514,5.5],[1099,607,6],[1172,601,7],[1174,690,6],[1506,714,7],[1386,366,15],[1542,426,15.5],[898,763,7.5],[51,1024,6.5],[191,1004,5.5],[741,1336,10.5],[1183,1337,5.5],[1456,1262,9],[1522,1213,12],[12,1325,7],[1054,1137,5],[980,1220,19],[980,1220,8],[838,540,2,1]],[]],
 [0,2240,`M300 172L615 10M628 172L655 30L650 10M705 172L752 8M735 72Q810 75 855 125M845 172L905 8M870 10L890 28M710 155Q760 140 810 172M0 165L20 125L22 172M1210 75Q1250 60 1270 0M1210 75Q1200 100 1225 103Q1290 60 1305 0M1120 117Q1138 110 1138 90Q1140 50 1090 40Q1090 15 1060 5Q1020 0 1000 37Q960 40 970 75Q925 85 935 120Q960 165 1040 160M345 170L380 168`,
 [[126,128,6.5],[195,107,9.5],[267,118,6.5],[515,137,9],[592,119,8]],[]],
 [585,2240,`M875 115Q930 35 1015 35Q1100 40 1155 115M975 98L1000 116H980ZM1475 170L1520 10L1568 35M1490 120H1568M670 115Q725 70 785 115M880 0Q900 8 945 0`,
 [[1227,78,8],[1402,92,7.5],[1544,154,4]],[]]
];

class DoodleWall extends HTMLElement {
  connectedCallback() {
    const root = this.attachShadow({mode: 'open'});
    const star = (cx, cy, r, rot) => {
      let d = '';
      for (let i = 0; i < 10; i++) {
        const a = (rot - 90 + i * 36) * Math.PI / 180, q = i % 2 ? r * .53 : r * 1.08;
        d += (i ? 'L' : 'M') + (cx + q * Math.cos(a)).toFixed(1) + ' ' + (cy + q * Math.sin(a)).toFixed(1);
      }
      return `<path d="${d}Z"/>`;
    };
    let art = '';
    for (const [ox, oy, d, dots, stars] of TILES) {
      art += `<path transform="translate(${ox} ${oy}) scale(${SX} ${SY})" stroke-width="8" d="${d}"/>`;
      for (const [x, y, r, solid] of dots) art += `<circle cx="${ox + x * SX}" cy="${oy + y * SY}" r="${r}"${solid ? ' fill="#242426"' : ''}/>`;
      for (const [x, y, r, rot] of stars) art += star(ox + x * SX, oy + y * SY, r, rot);
    }
    root.innerHTML = `<style>:host{display:block;position:absolute;inset:0;background:linear-gradient(#0d0d11,#0a0a0c 20%,#040405 50%,#000)}
svg{display:block;-webkit-mask-image:linear-gradient(#000,rgba(0,0,0,.82));mask-image:linear-gradient(#000,rgba(0,0,0,.82))}text{font-family:Inter,sans-serif}</style>
<svg width="1170" height="2024" viewBox="0 273 1170 2024" fill="none" stroke="#262629" stroke-width="2.800" stroke-linecap="round" stroke-linejoin="round">
${art}
<g font-weight="800" font-size="66" text-anchor="middle"><text transform="translate(966 393) rotate(28)" y="24">B</text><text transform="translate(1005 421) rotate(28)" y="24">F</text><text transform="translate(1041 449) rotate(28)" y="24">F</text></g>
<text transform="translate(937 1974) rotate(-14)" y="17" text-anchor="middle" font-size="48" font-weight="300" letter-spacing="4" stroke-width="1.500" fill="#242426">28</text>
<text transform="translate(736 2172) rotate(-12)" y="9" text-anchor="middle" font-size="28" font-weight="300" stroke-width="1" fill="#242426">W</text>
</svg>`;
  }
}

const simple = (name, id) => customElements.define(name, class extends HTMLElement {
  connectedCallback() { if (!this.shadowRoot) stamp(this, id); }
});
customElements.define('fit-text', FitText);
customElements.define('doodle-wall', DoodleWall);
customElements.define('chat-message', ChatMessage);
simple('status-bar', 'status-t');
simple('chat-header', 'header-t');
simple('chat-composer', 'composer-t');
simple('scroll-down', 'down-t');
simple('chat-app', 'app-t');
</script>
</body>
</html>
